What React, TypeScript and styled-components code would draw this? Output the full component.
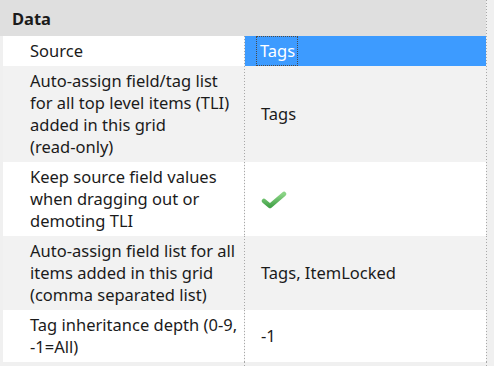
import React from "react";
import styled, { createGlobalStyle } from "styled-components";

const GlobalStyle = createGlobalStyle`
  html, body {
    margin: 0;
    padding: 0;
    background: #f0f0f0;
  }
  body {
    font-family: "Noto Sans", "Open Sans", sans-serif;
    font-size: 16.5px;
    color: #1b1b1b;
  }
`;

const Sheet = styled.div`
  width: 494px;
  height: 366px;
  overflow: hidden;
  background: #f0f0f0;
`;

const COLS = "3px 241px 1px 241px 1px 1fr";

const HeaderRow = styled.div`
  display: grid;
  grid-template-columns: 486px 1px 1fr;
  height: 36px;
`;

const HeaderCell = styled.div`
  background: #dfdfdf;
  font-weight: 700;
  display: flex;
  align-items: center;
  padding-left: 12px;
`;

const Dots = styled.div<{ $h?: number }>`
  height: ${(p) => (p.$h ? `${p.$h}px` : "auto")};
  background-image: linear-gradient(to bottom, #a8a8a8 1px, transparent 1px);
  background-size: 1px 3px;
`;

const Row = styled.div`
  display: grid;
  grid-template-columns: ${COLS};
`;

const Strip = styled.div`
  background: #f0f0f0;
`;

const Label = styled.div<{ $shade: boolean }>`
  background: ${(p) => (p.$shade ? "#f2f2f2" : "#ffffff")};
  padding: 4px 2px 4px 27px;
  line-height: 22px;
  white-space: nowrap;
`;

const Value = styled.div<{ $shade: boolean; $selected?: boolean }>`
  background: ${(p) =>
    p.$selected ? "#3d9bff" : p.$shade ? "#f2f2f2" : "#ffffff"};
  color: ${(p) => (p.$selected ? "#ffffff" : "inherit")};
  display: flex;
  align-items: center;
  padding-left: ${(p) => (p.$selected ? "12px" : "16px")};
  line-height: 22px;
`;

const Focus = styled.span`
  align-self: stretch;
  display: flex;
  align-items: center;
  margin: 1px 0;
  outline: 1px dotted #4a4a4a;
  padding: 0 2px 0 3px;
`;

const Check = () => (
  <svg width="26" height="20" viewBox="0 0 26 20">
    <defs>
      <linearGradient id="g" x1="0" y1="0" x2="0" y2="1">
        <stop offset="0" stopColor="#8bd486" />
        <stop offset="1" stopColor="#46a44b" />
      </linearGradient>
    </defs>
    <path
      d="M3 12 L9 17 L23 5"
      fill="none"
      stroke="url(#g)"
      strokeWidth="4.5"
      strokeLinecap="round"
      strokeLinejoin="round"
    />
  </svg>
);

type Prop = {
  label: React.ReactNode;
  value: React.ReactNode;
  selected?: boolean;
};

const props: Prop[] = [
  { label: "Source", value: "Tags", selected: true },
  {
    label: (
      <>
        Auto-assign field/tag list
        <br />
        for all top level items (TLI)
        <br />
        added in this grid
        <br />
        (read-only)
      </>
    ),
    value: "Tags",
  },
  {
    label: (
      <>
        Keep source field values
        <br />
        when dragging out or
        <br />
        demoting TLI
      </>
    ),
    value: <Check />,
  },
  {
    label: (
      <>
        Auto-assign field list for all
        <br />
        items added in this grid
        <br />
        (comma separated list)
      </>
    ),
    value: "Tags, ItemLocked",
  },
  {
    label: (
      <>
        Tag inheritance depth (0-9,
        <br />
        -1=All)
      </>
    ),
    value: "-1",
  },
];

export default function App() {
  return (
    <Sheet>
      <GlobalStyle />
      <HeaderRow>
        <HeaderCell>Data</HeaderCell>
        <Dots />
        <div />
      </HeaderRow>
      {props.map((p, i) => {
        const shade = i % 2 === 1;
        return (
          <Row key={i}>
            <Strip />
            <Label $shade={shade}>{p.label}</Label>
            <Dots />
            <Value $shade={shade} $selected={p.selected}>
              {p.selected ? <Focus>{p.value}</Focus> : p.value}
            </Value>
            <Dots />
            <div />
          </Row>
        );
      })}
      <Row>
        <div />
        <div />
        <Dots $h={10} />
        <div />
        <Dots $h={10} />
        <div />
      </Row>
    </Sheet>
  );
}
